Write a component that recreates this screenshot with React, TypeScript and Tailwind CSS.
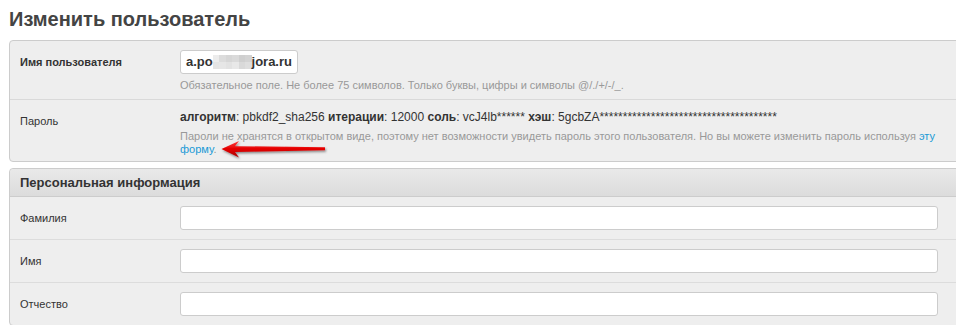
import React from "react";

const font = { fontFamily: '"Liberation Sans", Arial, Helvetica, sans-serif' };

function Blur() {
  const cols = [
    ["#ececec", "#e4e4e4"],
    ["#dcdcdc", "#e6e6e6"],
    ["#d6d6d6", "#e2e2e2"],
    ["#dadada", "#e8e8e8"],
    ["#cfcfcf", "#d9d9d9"],
    ["#d3d3d3", "#dedede"],
  ];
  return (
    <span className="inline-flex h-[14px] w-[42px] align-middle">
      {cols.map((c, i) => (
        <span key={i} className="flex flex-1 flex-col">
          <span className="flex-1" style={{ background: c[0] }} />
          <span className="flex-1" style={{ background: c[1] }} />
        </span>
      ))}
    </span>
  );
}

function Arrow() {
  return (
    <svg
      className="absolute left-[218px] top-[138px]"
      width="112"
      height="24"
      viewBox="0 0 112 24"
    >
      <defs>
        <linearGradient id="ar" x1="0" y1="0" x2="0" y2="1">
          <stop offset="0" stopColor="#ff3b3b" />
          <stop offset="0.5" stopColor="#e30000" />
          <stop offset="1" stopColor="#a80000" />
        </linearGradient>
        <filter id="sh" x="-10%" y="-40%" width="130%" height="200%">
          <feDropShadow dx="1" dy="1.5" stdDeviation="1" floodColor="#000" floodOpacity="0.45" />
        </filter>
      </defs>
      <polygon
        points="3.5,11 21,3 17,8.2 107,9.3 107,12.2 17,14 21,19.5"
        fill="url(#ar)"
        filter="url(#sh)"
      />
    </svg>
  );
}

function PersonalRow({ label, last }: { label: string; last?: boolean }) {
  return (
    <div className={`flex items-center pt-[9px] pb-[9px] ${last ? "" : "border-b border-[#dcdcdc]"}`}>
      <div className="w-[170px] pl-[10px] text-[11px] leading-[14px] text-[#333]">{label}</div>
      <div className="flex-1 pr-[22px]">
        <div className="h-[24px] w-full rounded-[3px] border border-[#cccccc] bg-white" />
      </div>
    </div>
  );
}

export default function App() {
  return (
    <div className="relative h-[325px] w-[956px] overflow-hidden bg-white" style={font}>
      <h1 className="pl-[9px] pt-[7px] text-[20px] font-bold leading-[24px] text-[#444]">
        Изменить пользователь
      </h1>

      <div className="ml-[9px] mt-[9px] w-[952px] rounded-[4px] border border-[#cccccc] bg-[#eeeeee]">
        <div className="flex border-b border-[#d9d9d9] pt-[9px] pb-[7px]">
          <div className="w-[170px] pl-[10px] pt-[5px] text-[11px] font-bold leading-[14px] text-[#333]">
            Имя пользователя
          </div>
          <div className="flex-1">
            <div className="flex h-[24px] w-[118px] items-center rounded-[3px] border border-[#cccccc] bg-white px-[5px] text-[13px] font-bold text-[#333]">
              <span>a.po</span>
              <Blur />
              <span>jora.ru</span>
            </div>
            <div className="mt-[5px] text-[11px] leading-[13px] text-[#999]">
              Обязательное поле. Не более 75 символов. Только буквы, цифры и символы @/./+/-/_.
            </div>
          </div>
        </div>

        <div className="flex pt-[10px] pb-[5px]">
          <div className="w-[170px] pl-[10px] pt-[4px] text-[11px] leading-[14px] text-[#333]">Пароль</div>
          <div className="flex-1">
            <div className="text-[12px] leading-[14px] text-[#333]">
              <b>алгоритм</b>: pbkdf2_sha256 <b>итерации</b>: 12000 <b>соль</b>: vcJ4lb******{" "}
              <b>хэш</b>: 5gcbZA**************************************
            </div>
            <div className="mt-[6px] text-[11px] leading-[13px] text-[#999]">
              Пароли не хранятся в открытом виде, поэтому нет возможности увидеть пароль этого пользователя. Но вы
              можете изменить пароль используя <span className="text-[#1a9ad6]">эту</span>
              <br />
              <span className="text-[#1a9ad6]">форму</span>.
            </div>
          </div>
        </div>
      </div>

      <div className="ml-[9px] mt-[6px] w-[952px] rounded-[4px] border border-[#cccccc] bg-[#eeeeee]">
        <div className="h-[28px] rounded-t-[4px] border-b border-[#cccccc] bg-gradient-to-b from-[#e9e9e9] to-[#dcdcdc] pl-[10px] text-[13px] font-bold leading-[27px] text-[#333]">
          Персональная информация
        </div>
        <PersonalRow label="Фамилия" />
        <PersonalRow label="Имя" />
        <PersonalRow label="Отчество" last />
      </div>

      <Arrow />
    </div>
  );
}
